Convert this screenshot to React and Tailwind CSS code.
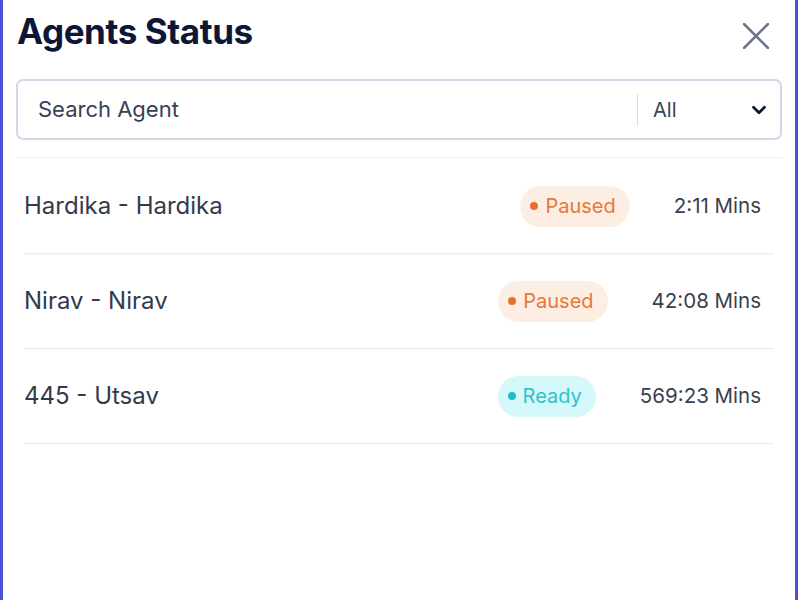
import { ChevronDown } from "lucide-react";

const agents = [
  { id: 1, name: "Hardika - Hardika", status: "Paused", time: "2:11 Mins" },
  { id: 2, name: "Nirav - Nirav", status: "Paused", time: "42:08 Mins" },
  { id: 3, name: "445 - Utsav", status: "Ready", time: "569:23 Mins" },
];

function StatusBadge({ status }) {
  const ready = status === "Ready";
  return (
    <span
      className={`flex items-center h-[41px] pl-[10px] pr-[14px] rounded-full text-[20px] ${
        ready ? "bg-[#d5f8fb] text-[#2cc3cc]" : "bg-[#fdeee3] text-[#e8773a]"
      }`}
    >
      <span
        className={`w-[8px] h-[8px] rounded-full mr-[7px] ${
          ready ? "bg-[#22bcc6]" : "bg-[#e86f2c]"
        }`}
      />
      {status}
    </span>
  );
}

export default function App() {
  return (
    <div
      className="w-[800px] h-[600px] bg-white overflow-hidden"
      style={{ fontFamily: "Inter, 'Noto Sans', sans-serif" }}
    >
      <div className="w-[798px] h-full border-x-[3px] border-[#4b4fd6] bg-white">
        <div className="flex items-center justify-between pl-[14px] pr-[26px] pt-[10px]">
          <h1 className="text-[35px] leading-[42px] font-bold text-[#0d1636] tracking-[-0.4px]">
            Agents Status
          </h1>
          <button className="text-[#6d7389] mt-[10px]">
            <svg width="26" height="26" viewBox="0 0 26 26" fill="none">
              <path
                d="M1 1L25 25M25 1L1 25"
                stroke="currentColor"
                strokeWidth="2.6"
                strokeLinecap="round"
              />
            </svg>
          </button>
        </div>

        <div className="px-[13px] mt-[27px]">
          <div className="flex items-center h-[61px] border-2 border-[#d3d7e7] rounded-[7px]">
            <input
              className="flex-1 pl-[20px] text-[22px] text-[#333a4d] placeholder-[#3a4054] outline-none bg-transparent"
              placeholder="Search Agent"
            />
            <div className="w-[1px] h-[32px] bg-[#d9dbe2]" />
            <div className="flex items-center justify-between w-[142px] pl-[15px] pr-[10px]">
              <span className="text-[20px] text-[#3b4155]">All</span>
              <ChevronDown size={22} strokeWidth={3} className="text-[#0d1636]" />
            </div>
          </div>
          <div className="h-[1px] bg-[#eeeff2] mt-[17px]" />
        </div>

        <div className="px-[21px] pt-[1px]">
          {agents.map((a) => (
            <div
              key={a.id}
              className="flex items-center h-[95px] border-b border-[#ececef] shadow-[0_1px_1px_rgba(0,0,0,0.02)]"
            >
              <span className="flex-1 text-[24px] text-[#333a4a]">{a.name}</span>
              <StatusBadge status={a.status} />
              <span className="ml-[44px] mr-[13px] text-[20.5px] text-[#3a3f4e]">{a.time}</span>
            </div>
          ))}
        </div>
      </div>
    </div>
  );
}
